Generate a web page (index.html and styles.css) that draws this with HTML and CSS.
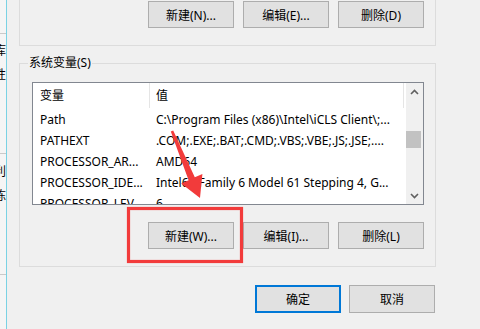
FILE: index.html
```html
<!DOCTYPE html>
<html lang="zh-CN">
<head>
    <meta charset="UTF-8">
    <meta name="viewport" content="width=device-width, initial-scale=1.0">
    <title>环境变量</title>
    <link rel="stylesheet" href="styles.css">
</head>
<body>
    <div class="screen">
        <!-- window behind the dialog, only its right edge shows -->
        <aside class="behind">
            <div class="behind-sep"></div>
            <div class="behind-text first"><span>数据库</span></div>
            <div class="behind-text"><span>可选性</span></div>
            <div class="behind-gap"></div>
            <div class="behind-sep"></div>
            <div class="behind-text second"><span>有利</span></div>
            <div class="behind-text"><span>部分陈</span></div>
            <div class="behind-gap"></div>
            <div class="behind-sep"></div>
        </aside>

        <main class="dialog">
            <div class="group user-vars">
                <div class="btn-row">
                    <button class="btn">新建(N)...</button>
                    <button class="btn">编辑(E)...</button>
                    <button class="btn">删除(D)</button>
                </div>
            </div>

            <fieldset class="group sys-vars">
                <legend>系统变量(S)</legend>
                <div class="listview">
                    <div class="lv-body">
                        <div class="lv-row lv-head">
                            <div class="lv-cell">变量</div>
                            <div class="lv-cell">值</div>
                        </div>
                        <div class="lv-row">
                            <div class="lv-cell">Path</div>
                            <div class="lv-cell">C:\Program Files (x86)\Intel\iCLS Client\;...</div>
                        </div>
                        <div class="lv-row">
                            <div class="lv-cell">PATHEXT</div>
                            <div class="lv-cell">.COM;.EXE;.BAT;.CMD;.VBS;.VBE;.JS;.JSE;....</div>
                        </div>
                        <div class="lv-row">
                            <div class="lv-cell">PROCESSOR_AR...</div>
                            <div class="lv-cell">AMD64</div>
                        </div>
                        <div class="lv-row">
                            <div class="lv-cell">PROCESSOR_IDE...</div>
                            <div class="lv-cell">Intel64 Family 6 Model 61 Stepping 4, G...</div>
                        </div>
                        <div class="lv-row">
                            <div class="lv-cell">PROCESSOR_LEV...</div>
                            <div class="lv-cell">6</div>
                        </div>
                    </div>
                    <div class="scrollbar">
                        <div class="sb-arrow">
                            <svg width="9" height="6" viewBox="0 0 9 6"><path d="M1 5 L4.5 1.5 L8 5" fill="none" stroke="#606060" stroke-width="1.6"/></svg>
                        </div>
                        <div class="sb-track"><div class="sb-thumb"></div></div>
                        <div class="sb-arrow">
                            <svg width="9" height="6" viewBox="0 0 9 6"><path d="M1 1 L4.5 4.5 L8 1" fill="none" stroke="#606060" stroke-width="1.6"/></svg>
                        </div>
                    </div>
                </div>
                <div class="btn-row">
                    <button class="btn">新建(W)...</button>
                    <button class="btn">编辑(I)...</button>
                    <button class="btn">删除(L)</button>
                </div>
            </fieldset>

            <div class="dialog-buttons">
                <button class="btn btn-default">确定</button>
                <button class="btn">取消</button>
            </div>
        </main>

        <!-- red annotation drawn over the screenshot -->
        <svg class="annotation" width="480" height="329" viewBox="0 0 480 329">
            <rect x="128.5" y="208.5" width="113" height="53" fill="none" stroke="#f23b3b" stroke-width="3.2"/>
            <polygon points="173.2,130.4 194.8,177.2 202.4,174 200,198 181.2,183.4 188.6,180.2 170.8,131.6" fill="#f23b3b"/>
        </svg>
    </div>
</body>
</html>
```

FILE: styles.css
```css
:root {
    --dialog-bg: #f0f0f0;
    --group-line: #dcdcdc;
    --btn-bg: #e1e1e1;
    --btn-border: #adadad;
}

body {
    margin: 0;
    font-family: 'Noto Sans', 'Noto Sans CJK SC', sans-serif;
    font-size: 12px;
    color: #000;
    background: var(--dialog-bg);
}

.screen {
    position: relative;
    display: flex;
    width: 480px;
    height: 329px;
    overflow: hidden;
}

/* Window behind */
.behind {
    width: 6px;
    flex-shrink: 0;
    overflow: hidden;
    background: #f5f5f5;
    border-right: 1px solid #7ad2e4;
    padding-top: 33px;
    display: flex;
    flex-direction: column;
}

.behind-sep {
    height: 1px;
    background: #c9c9c9;
}

.behind-text {
    display: flex;
    justify-content: flex-end;
    height: 24px;
    line-height: 24px;
    white-space: nowrap;
}

.behind-text.first {
    margin-top: 5px;
}

.behind-text.second {
    margin-top: 6px;
}

.behind-gap {
    height: 66px;
}

/* Dialog */
.dialog {
    flex: 1;
    padding-left: 12px;
}

.group {
    width: 417px;
    box-sizing: border-box;
    border: 1px solid var(--group-line);
}

.user-vars {
    border-top: none;
    height: 46px;
    padding-top: 1px;
}

.btn-row {
    display: flex;
    justify-content: flex-end;
    gap: 9px;
    padding-right: 11px;
}

.btn {
    width: 86px;
    height: 27px;
    box-sizing: border-box;
    background: var(--btn-bg);
    border: 1px solid var(--btn-border);
    font: inherit;
    color: #000;
    padding: 0;
}

.sys-vars {
    margin: 9px 0 0;
    padding: 11px 0 17px 12px;
    min-width: 0;
}

.sys-vars legend {
    margin-left: -4px;
    padding: 0 1px;
    line-height: 16px;
    height: 16px;
}

.sys-vars .btn-row {
    margin-top: 17px;
}

/* List view */
.listview {
    display: flex;
    width: 392px;
    height: 123px;
    box-sizing: border-box;
    border: 1px solid #828790;
    background: #fff;
    overflow: hidden;
}

.lv-body {
    flex: 1;
    overflow: hidden;
}

.lv-row {
    display: grid;
    grid-template-columns: 117px 254px;
    height: 21px;
    line-height: 21px;
    white-space: nowrap;
}

.lv-row:nth-child(2) {
    margin-top: 1px;
}

.lv-head {
    height: 25px;
    line-height: 25px;
}

.lv-cell {
    overflow: hidden;
    padding-left: 7px;
}

.lv-cell + .lv-cell {
    padding-left: 6px;
}

.lv-head .lv-cell {
    border-right: 1px solid #e5e5e5;
}

.scrollbar {
    width: 17px;
    display: flex;
    flex-direction: column;
    background: #f0f0f0;
}

.sb-arrow {
    height: 17px;
    display: flex;
    align-items: center;
    justify-content: center;
}

.sb-track {
    flex: 1;
}

.sb-thumb {
    margin-top: 31px;
    width: 15px;
    height: 17px;
    background: #c2c2c2;
}

/* OK / Cancel */
.dialog-buttons {
    width: 417px;
    display: flex;
    justify-content: flex-end;
    gap: 8px;
    margin-top: 18px;
    padding-right: 1px;
    box-sizing: border-box;
}

.dialog-buttons .btn {
    height: 28px;
}

.btn-default {
    border: 2px solid #0078d7;
}

.annotation {
    position: absolute;
    top: 0;
    left: 0;
    pointer-events: none;
}
```
